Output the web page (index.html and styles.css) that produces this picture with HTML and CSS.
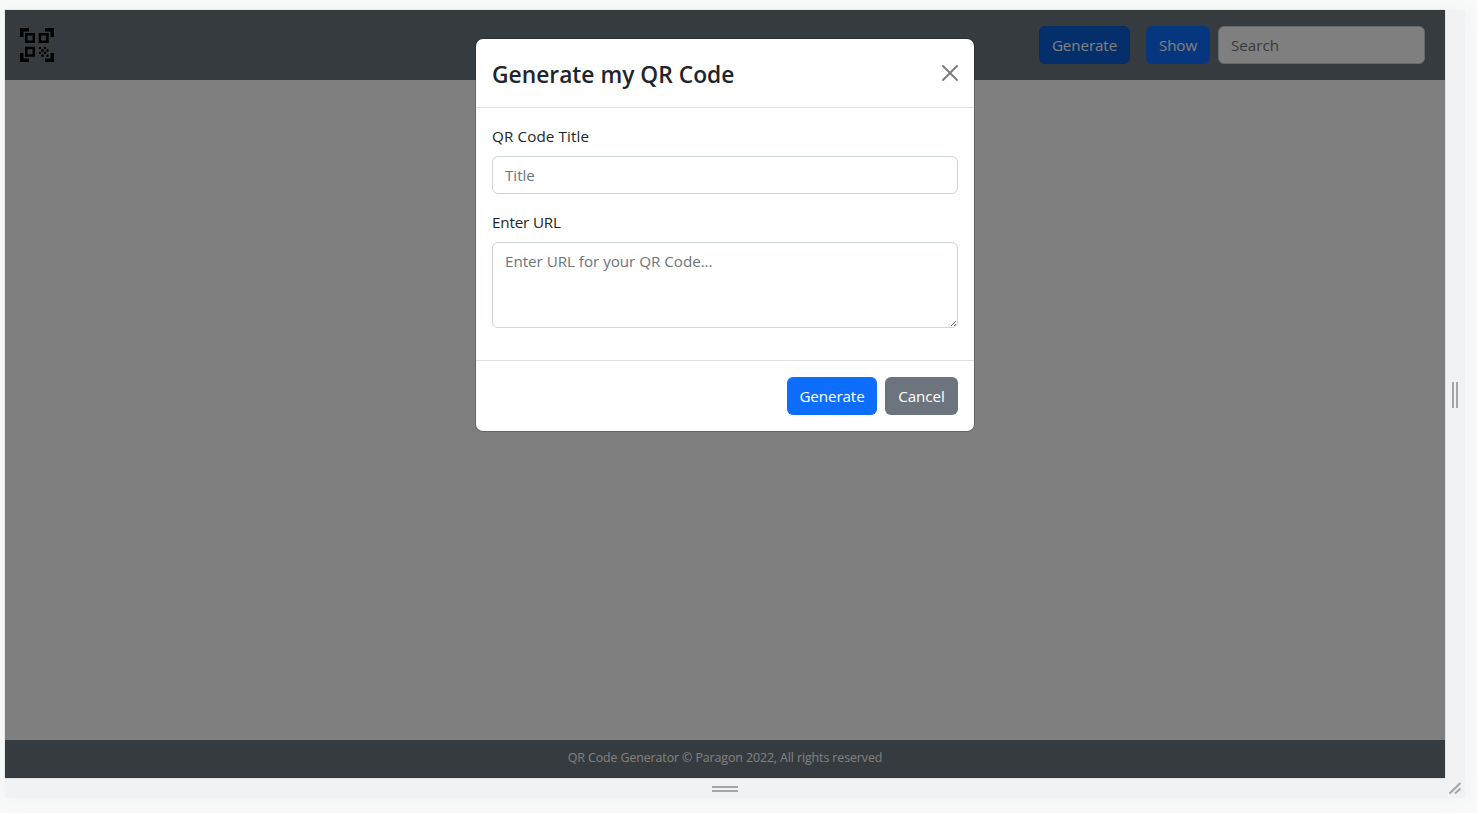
FILE: index.html
```html
<!DOCTYPE html>
<html lang="en">
<head>
<meta charset="utf-8">
<title>QR Code Generator</title>
<link rel="stylesheet" href="styles.css">
</head>
<body>
<div class="frame">
  <div class="viewport">
    <nav class="navbar">
      <svg class="logo" viewBox="0 0 34 34" aria-label="QR Code Generator">
        <path d="M0 0h9v3.500H3.500V9H0zM25 0h9v9h-3.500V3.500H25zM0 25h3.500v5.500H9V34H0zM30.500 25H34v9h-9v-3.500h5.500z"/>
        <path fill-rule="evenodd" d="M5 5h10v10H5zM7.500 7.500v5h5v-5zM18.700 5h10v10h-10zM21.200 7.500v5h5v-5zM5 18.700h10v10H5zM7.500 21.200v5h5v-5z"/>
        <path d="M19 19h2v2h-2zM24 19h2v2h-2zM21.300 21.300h2.400v2.400h-2.400zM26.500 21.300h2v2.400h-2zM19 24h2v2h-2zM23.900 23.800h2.400v2.400h-2.400zM21.300 26.500h2.400v2.200h-2.400zM26.500 26.500h2v2.200h-2z"/>
      </svg>
      <div class="actions">
        <button class="btn btn-generate btn-active">Generate</button>
        <button class="btn btn-show">Show</button>
        <input class="control search" type="text" placeholder="Search">
      </div>
    </nav>
    <main class="content"></main>
    <footer class="footer"><span>QR Code Generator © Paragon 2022, All rights reserved</span></footer>
    <div class="backdrop">
      <section class="modal" role="dialog">
        <header class="modal-header">
          <h4 class="modal-title"><span>Generate my QR Code</span></h4>
          <svg class="close" viewBox="0 0 16 16"><path d="M.293.293a1 1 0 011.414 0L8 6.586 14.293.293a1 1 0 111.414 1.414L9.414 8l6.293 6.293a1 1 0 01-1.414 1.414L8 9.414l-6.293 6.293a1 1 0 01-1.414-1.414L6.586 8 .293 1.707a1 1 0 010-1.414z"/></svg>
        </header>
        <div class="modal-body">
          <label class="label label-title" for="title"><span>QR Code Title</span></label>
          <input class="control" id="title" type="text" placeholder="Title">
          <label class="label label-url" for="url"><span>Enter URL</span></label>
          <textarea class="control area" id="url" placeholder="Enter URL for your QR Code..."></textarea>
        </div>
        <div class="modal-footer">
          <button class="btn btn-submit">Generate</button>
          <button class="btn btn-cancel">Cancel</button>
        </div>
      </section>
    </div>
  </div>
  <div class="handle handle-right"></div>
  <div class="handle handle-bottom"></div>
  <div class="handle-corner">
    <svg viewBox="0 0 20 20"><path d="M4.500 15.500 15.500 5M10 15.500 15.500 10.500"/></svg>
  </div>
</div>
</body>
</html>
```
FILE: styles.css
```css
* { box-sizing: border-box; }

body {
  margin: 0;
  padding: 10px 5px;
  height: 813px;
  overflow: hidden;
  background: #f8faf9;
  color: #212529;
  font: 15.200px/24px "Open Sans", "Noto Sans", sans-serif;
}

.frame {
  display: grid;
  grid-template: 768px 20px / 1440px 20px;
  width: 1460px;
  background: #f1f2f4;
  box-shadow: 0 0 24px rgba(0, 0, 0, .03);
}

.viewport {
  position: relative;
  display: flex;
  flex-direction: column;
  background: #fff;
  box-shadow: 0 0 1px rgba(0, 0, 0, .35);
}

.navbar {
  display: flex;
  align-items: center;
  justify-content: space-between;
  height: 70px;
  padding: 0 20px 0 15px;
  background: #6c777e;
}

.logo { width: 34px; height: 34px; }
.actions { display: flex; }
.content { flex: 1; }

.footer {
  height: 38px;
  background: #6c777e;
  color: #fff;
  font-size: 12.400px;
  line-height: 36px;
  text-align: center;
  letter-spacing: -.1px;
}

.backdrop {
  position: absolute;
  inset: 0;
  display: flex;
  align-items: flex-start;
  justify-content: center;
  padding-top: 29px;
  background: rgba(0, 0, 0, .5);
}

.btn {
  height: 38px;
  padding: 0;
  border: 0;
  border-radius: 6px;
  background: #0d6efd;
  color: #fff;
  font: inherit;
  letter-spacing: -.1px;
  text-align: center;
}

.btn-generate { width: 91px; margin-right: 16px; }
.btn-active { background: #0b5ed7; border: 1px solid #0a58ca; }
.btn-show { width: 64px; margin-right: 8px; }
.btn-submit { width: 90px; }
.btn-cancel { width: 73px; background: #6c757d; }

.control {
  display: block;
  width: 100%;
  height: 38px;
  padding: 6px 12px;
  border: 1px solid #ced4da;
  border-radius: 6px;
  background: #fff;
  font: inherit;
  letter-spacing: -.03px;
}

.control::placeholder { color: #6c757d; opacity: 1; }
.search { width: 207px; }

.modal {
  width: 498px;
  height: 392px;
  border-radius: 7px;
  background: #fff;
  box-shadow: 0 0 0 1px rgba(0, 0, 0, .2);
}

.modal-header {
  display: flex;
  justify-content: space-between;
  height: 69px;
  padding: 21px 16px 0;
  border-bottom: 1px solid #dee2e6;
}

.modal-title {
  margin: 0;
  font-size: 22.800px;
  font-weight: 550;
  line-height: 29px;
  letter-spacing: 0;
}

.close { width: 16px; height: 16px; margin-top: 5px; opacity: .5; }
.modal-body { height: 252px; padding: 16px; }
.label { display: block; height: 24px; margin-bottom: 8px; letter-spacing: -.16px; }
.label-title { letter-spacing: .12px; }
.label-url { margin-top: 16px; }

/* compact two-stroke grip in the textarea corner */
.area {
  height: 86px;
  resize: none;
  background: #fff linear-gradient(135deg, transparent 42%, #666 42% 56%, transparent 56% 74%, #666 74% 88%, transparent 88%) right 1px bottom 1px / 5px 5px no-repeat;
}

.modal-footer {
  display: flex;
  justify-content: flex-end;
  gap: 8px;
  height: 71px;
  padding: 16px;
  border-top: 1px solid #dee2e6;
}

.handle { display: flex; align-items: center; justify-content: center; }

.handle::before {
  content: "";
  box-sizing: border-box;
  width: 6px;
  height: 26px;
  border: solid #a5a5a5;
  border-width: 0 2px;
}

.handle-right { padding-top: 2px; }

.handle-bottom { padding-top: 2px; }

.handle-bottom::before {
  width: 26px;
  height: 6px;
  border-width: 2px 0;
}

.handle-corner svg {
  display: block;
  width: 20px;
  height: 20px;
  fill: none;
  stroke: #a5a5a5;
  stroke-width: 2;
}
```
